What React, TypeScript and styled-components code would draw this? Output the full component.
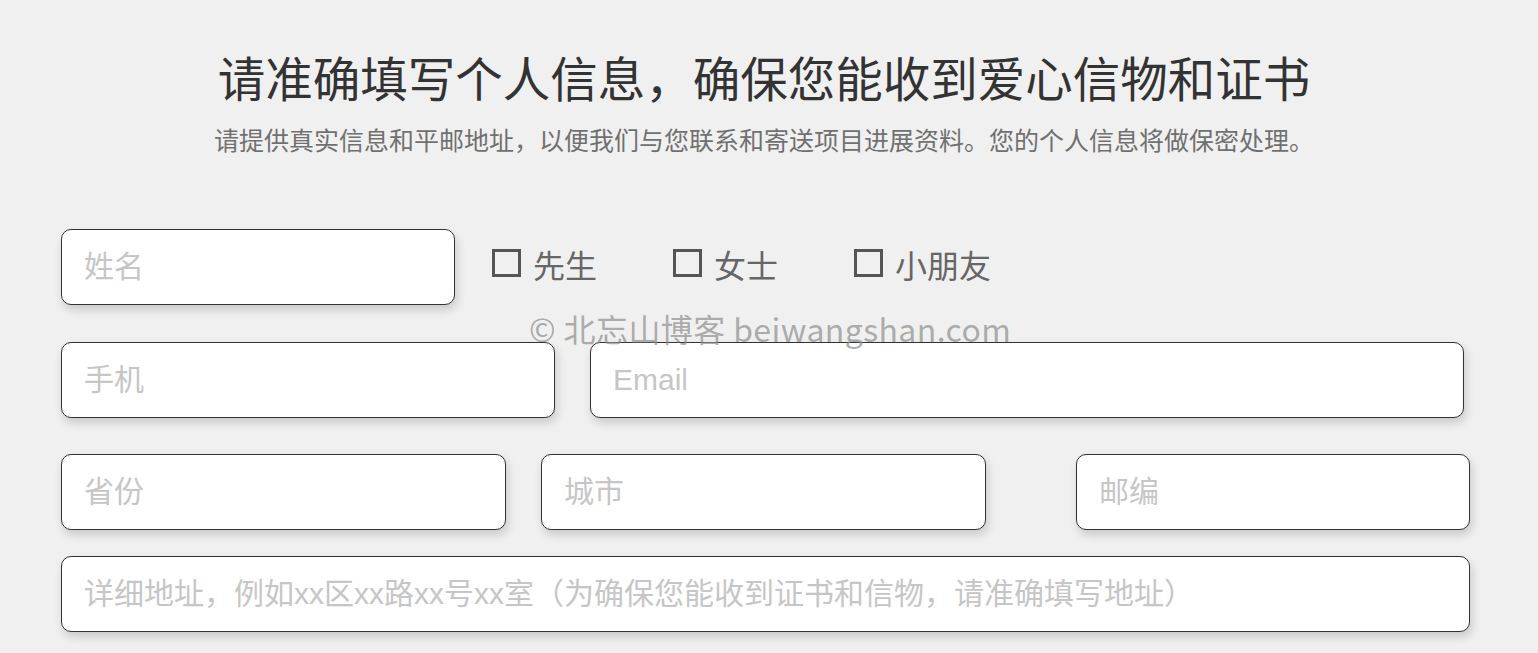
import React from "react";
import styled, { createGlobalStyle } from "styled-components";

const GlobalStyle = createGlobalStyle`
  html, body {
    margin: 0;
    padding: 0;
    background: #f0f0f0;
  }
  body {
    font-family: "Liberation Sans", "Noto Sans CJK SC", sans-serif;
  }
  * { box-sizing: border-box; }
`;

const Page = styled.div`
  position: relative;
  min-height: 653px;
  background: #f0f0f0;
  padding-top: 48px;
  overflow: hidden;
`;

const Header = styled.header`
  display: flex;
  flex-direction: column;
  align-items: center;
  padding-right: 10px;
`;

const Title = styled.h1`
  margin: 0;
  font-family: "Noto Sans CJK SC", sans-serif;
  font-weight: 400;
  font-size: 47.5px;
  line-height: 58px;
  color: #333333;
`;

const Subtitle = styled.p`
  margin: 18px 0 0;
  font-family: "Noto Sans CJK SC", sans-serif;
  font-size: 25px;
  line-height: 30px;
  color: #707070;
`;

const Form = styled.form`
  width: 1409px;
  margin: 75px 0 0 61px;
  display: flex;
  flex-direction: column;
`;

const Row = styled.div<{ $gap?: number; $mt?: number }>`
  display: flex;
  align-items: center;
  gap: ${(p) => p.$gap ?? 35}px;
  margin-top: ${(p) => p.$mt ?? 0}px;
`;

const Field = styled.input<{ $w: number }>`
  width: ${(p) => p.$w}px;
  flex: none;
  height: 76px;
  border: 1px solid #333333;
  border-radius: 10px;
  background: #ffffff;
  box-shadow: 2px 5px 10px rgba(0, 0, 0, 0.16);
  padding: 0 22px;
  font-family: "Liberation Sans", "Noto Sans CJK SC", sans-serif;
  font-size: 30px;
  color: #333;
  outline: none;
  &::placeholder {
    color: #c6c6c6;
  }
`;

const Spacer = styled.div<{ $w: number }>`
  width: ${(p) => p.$w}px;
  flex: none;
`;

const Options = styled.div`
  display: flex;
  align-items: center;
  gap: 76px;
  margin: 0 0 6px 37px;
`;

const Option = styled.label`
  display: flex;
  align-items: center;
  gap: 12px;
  font-family: "Noto Sans CJK SC", sans-serif;
  font-size: 32px;
  line-height: 40px;
  color: #666666;
  cursor: pointer;
`;

const Box = styled.input`
  appearance: none;
  -webkit-appearance: none;
  margin: 0 0 2px;
  width: 29px;
  height: 28px;
  border: 3px solid #555555;
  background: transparent;
  flex: none;
`;

const Watermark = styled.div`
  position: absolute;
  left: 529px;
  top: 308px;
  font-family: "Noto Sans CJK SC", sans-serif;
  font-size: 32px;
  line-height: 40px;
  letter-spacing: 0.4px;
  color: rgba(140, 140, 140, 0.7);
  pointer-events: none;
  white-space: nowrap;
`;

export default function App() {
  return (
    <Page>
      <GlobalStyle />
      <Header>
        <Title>请准确填写个人信息，确保您能收到爱心信物和证书</Title>
        <Subtitle>
          请提供真实信息和平邮地址，以便我们与您联系和寄送项目进展资料。您的个人信息将做保密处理。
        </Subtitle>
      </Header>
      <Form>
        <Row $gap={0}>
          <Field $w={394} placeholder="姓名" />
          <Options>
            <Option>
              <Box type="checkbox" />
              先生
            </Option>
            <Option>
              <Box type="checkbox" />
              女士
            </Option>
            <Option>
              <Box type="checkbox" />
              小朋友
            </Option>
          </Options>
        </Row>
        <Row $mt={37}>
          <Field $w={494} placeholder="手机" />
          <Field $w={874} placeholder="Email" />
        </Row>
        <Row $mt={36} $gap={0}>
          <Field $w={445} placeholder="省份" />
          <Spacer $w={35} />
          <Field $w={445} placeholder="城市" />
          <Spacer $w={90} />
          <Field $w={394} placeholder="邮编" />
        </Row>
        <Row $mt={26}>
          <Field
            $w={1409}
            placeholder="详细地址，例如xx区xx路xx号xx室（为确保您能收到证书和信物，请准确填写地址）"
          />
        </Row>
      </Form>
      <Watermark>© 北忘山博客 beiwangshan.com</Watermark>
    </Page>
  );
}
